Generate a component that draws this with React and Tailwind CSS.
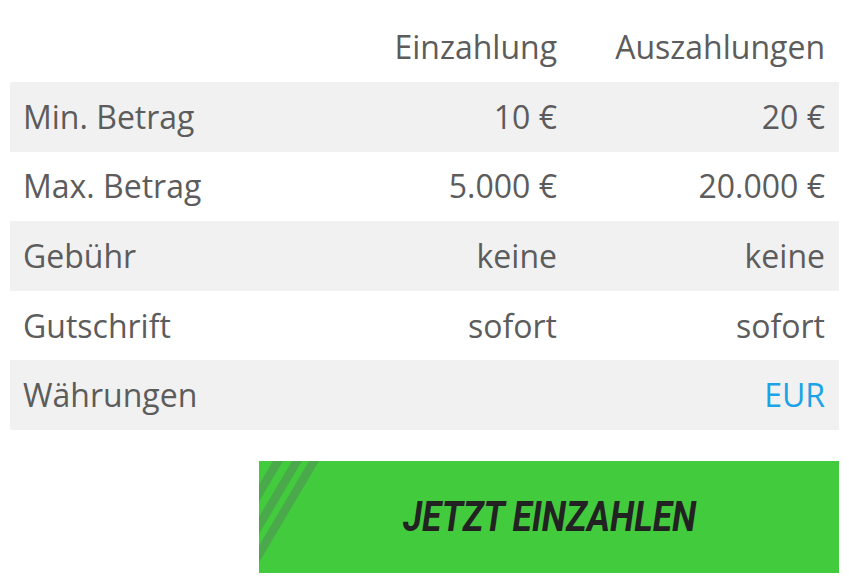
export default function App() {
  const rows = [
    ["Min. Betrag", "10 €", "20 €"],
    ["Max. Betrag", "5.000 €", "20.000 €"],
    ["Gebühr", "keine", "keine"],
    ["Gutschrift", "sofort", "sofort"],
    ["Währungen", "", "EUR"],
  ];
  return (
    <div className="w-[849px] h-[587px] bg-white px-[10px] pt-[12px] text-[#5c5c5c] text-[32px]" style={{ fontFamily: '"Open Sans", sans-serif' }}>
      <div className="grid grid-cols-[249px_311px_268px] h-[70px] items-center">
        <div></div>
        <div className="text-right pr-[13px]">Einzahlung</div>
        <div className="text-right pr-[13px]">Auszahlungen</div>
      </div>
      {rows.map((r, i) => (
        <div key={i} className={`grid grid-cols-[249px_311px_268px] h-[69.6px] items-center ${i % 2 === 0 ? "bg-[#f1f1f1]" : "bg-white"}`}>
          <div className="pl-[13px]">{r[0]}</div>
          <div className="text-right pr-[13px]">{r[1]}</div>
          <div className={`text-right pr-[13px] ${r[0] === "Währungen" ? "text-[#1aa3e6]" : ""}`}>{r[2]}</div>
        </div>
      ))}
      <div className="flex justify-end mt-[31px]">
        <div className="relative w-[580px] h-[112px] bg-[#43cb3e] flex items-center justify-center overflow-hidden">
          <svg className="absolute left-0 top-0" width="580" height="112" viewBox="0 0 580 112">
            <polygon points="14,0 24,0 -42,112 -52,112" fill="#4aa94a" />
            <polygon points="33,0 43,0 -23,112 -33,112" fill="#4aa94a" />
            <polygon points="50,0 60,0 -6,112 -16,112" fill="#4aa94a" />
          </svg>
          <span className="relative italic font-bold text-[42px] text-[#222] tracking-[0px] scale-x-[0.84] leading-none" style={{ fontFamily: 'Roboto, sans-serif' }}>JETZT EINZAHLEN</span>
        </div>
      </div>
    </div>
  );
}
